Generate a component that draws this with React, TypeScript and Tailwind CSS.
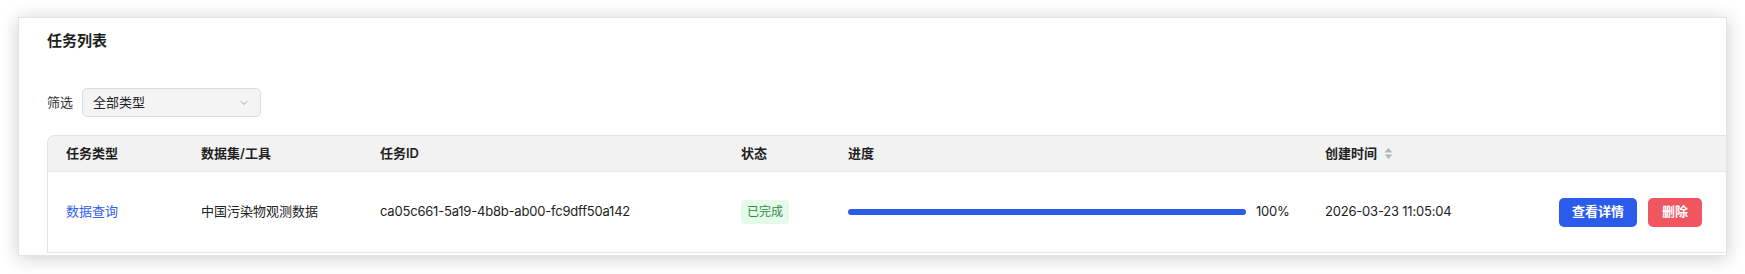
import { ChevronDown } from "lucide-react";

const FONT = "font-['Inter','Noto_Sans_CJK_SC',sans-serif]";

function SortIcon() {
  return (
    <svg width="9" height="13" viewBox="0 0 9 13" className="ml-[7px] shrink-0">
      <path d="M4.5 1 L8.5 5.5 H0.5 Z" fill="#b3b6bd" />
      <path d="M4.5 12 L8.5 7.5 H0.5 Z" fill="#b3b6bd" />
    </svg>
  );
}

export default function App() {
  return (
    <div className={`${FONT} bg-white w-[1745px] h-[274px] pt-[17px] px-[18px]`}>
      <div className="h-[239px] bg-white border border-[#e4e4e4] shadow-[0_2px_18px_rgba(0,0,0,0.2)] overflow-hidden pl-[28px] pt-[12px]">
        {/* Title */}
        <h2 className="text-[15px] leading-[22px] font-bold text-[#1f1f1f]">任务列表</h2>

        {/* Filter */}
        <div className="mt-[36px] flex items-center gap-[9px]">
          <span className="text-[13px] text-[#333]">筛选</span>
          <div className="w-[179px] h-[29px] rounded-[5px] border border-[#dcdde2] bg-[#f4f4f5] flex items-center justify-between pl-[10px] pr-[10px]">
            <span className="text-[13px] text-[#222]">全部类型</span>
            <ChevronDown className="w-[12px] h-[12px] text-[#888]" strokeWidth={1.5} />
          </div>
        </div>

        {/* Table */}
        <div className="mt-[18px] w-[1720px] border-l border-t border-[#e2e2e2] rounded-tl-[8px] overflow-hidden">
          <div className="flex items-center h-[36px] bg-[#f2f2f2] border-b border-[#e4e7ee] text-[13px] font-semibold text-[#1f1f1f]">
            <div className="w-[135px] shrink-0 pl-[18px]">任务类型</div>
            <div className="w-[179px] shrink-0 pl-[18px]">数据集/工具</div>
            <div className="w-[361px] shrink-0 pl-[18px]">任务ID</div>
            <div className="w-[107px] shrink-0 pl-[18px]">状态</div>
            <div className="w-[477px] shrink-0 pl-[18px]">进度</div>
            <div className="w-[234px] shrink-0 pl-[18px] flex items-center">
              创建时间
              <SortIcon />
            </div>
            <div className="flex-1" />
          </div>

          <div className="flex items-center h-[81px] border-b border-[#e4e7ee] text-[13px] text-[#222]">
            <div className="w-[135px] shrink-0 pl-[18px] text-[#3060ee]">数据查询</div>
            <div className="w-[179px] shrink-0 pl-[18px]">中国污染物观测数据</div>
            <div className="w-[361px] shrink-0 pl-[18px] tracking-[-0.2px]">ca05c661-5a19-4b8b-ab00-fc9dff50a142</div>
            <div className="w-[107px] shrink-0 pl-[18px]">
              <span className="inline-flex items-center h-[24px] px-[6px] rounded-[4px] bg-[#e4fbe9] text-[12px] text-[#2f8a4c]">
                已完成
              </span>
            </div>
            <div className="w-[477px] shrink-0 pl-[18px] flex items-center">
              <div className="w-[398px] shrink-0 h-[6px] rounded-full bg-[#2d5bea]" />
              <span className="ml-[10px] tracking-[-0.2px]">100%</span>
            </div>
            <div className="w-[234px] shrink-0 pl-[18px] tracking-[-0.2px]">2026-03-23 11:05:04</div>
            <div className="flex-1 pl-[18px] flex items-center gap-[11px]">
              <button className="h-[29px] px-[13px] rounded-[5px] bg-[#2b5bea] text-white text-[13px] font-semibold">
                查看详情
              </button>
              <button className="h-[29px] px-[14px] rounded-[5px] bg-[#f0565f] text-white text-[13px] font-semibold">
                删除
              </button>
            </div>
          </div>
        </div>
      </div>
    </div>
  );
}
